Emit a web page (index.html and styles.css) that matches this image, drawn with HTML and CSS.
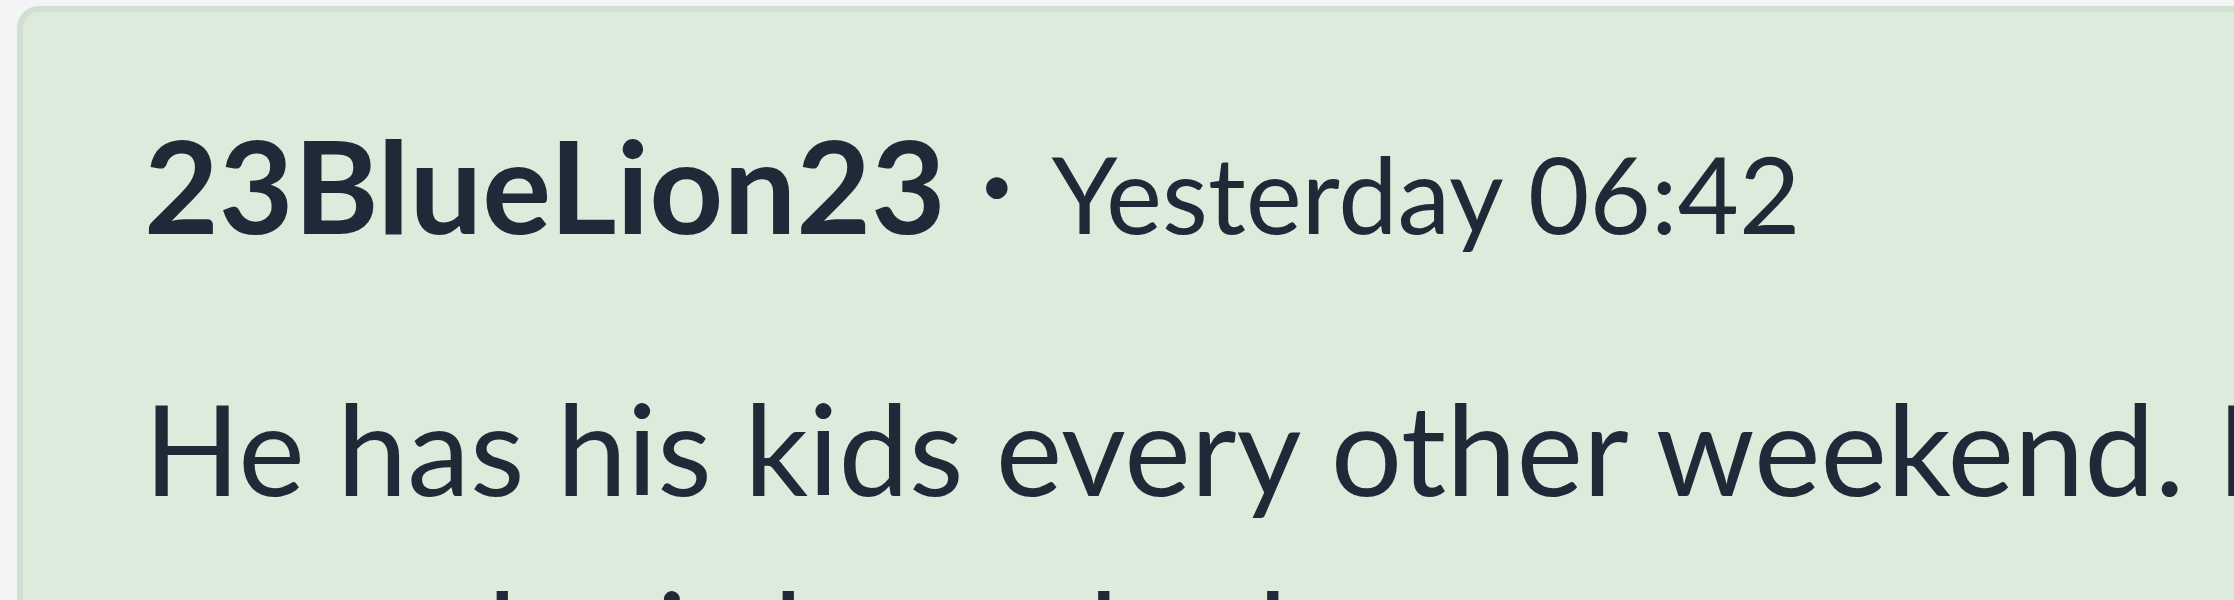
FILE: index.html
```html
<!doctype html>
<html lang="en">
<head>
	<meta charset="UTF-8">
	<meta name="viewport" content="width=device-width, initial-scale=1.0">
	<title>Comment</title>
	<link rel="stylesheet" href="styles.css">
</head>
<body>
	<div class="comment">
		<div class="comment-head"><span class="author">23BlueLion23</span><span class="dot">•</span><span class="time">Yesterday 06:42</span></div>
		<p class="comment-body">He has his kids every other weekend. I guess he is busy, he has a new son, we both know that.</p>
	</div>
</body>
</html>
```
FILE: styles.css
```css
* {
	margin: 0;
	padding: 0;
}
html, body {
	overflow: hidden;
}
body {
	background: #f3f4f6;
	font-family: Lato, "Noto Sans", sans-serif;
	color: #1f2937;
}

.comment {
	width: 2256px;
	margin: 6px 0 0 17px;
	padding: 97px 121px 80px;
	background: #ddebdd;
	border: 6px solid #d1e0d2;
	border-radius: 22px;
}

.comment-head {
	font-size: 106px;
	line-height: 150px;
	white-space: nowrap;
}
.author {
	font-size: 129px;
	font-weight: 700;
}
.dot {
	font-size: 58px;
	vertical-align: 28px;
	margin-left: 34px;
}
.time {
	margin-left: 38px;
}

.comment-body {
	margin-top: 86px;
	font-size: 126px;
	line-height: 188px;
}
```
